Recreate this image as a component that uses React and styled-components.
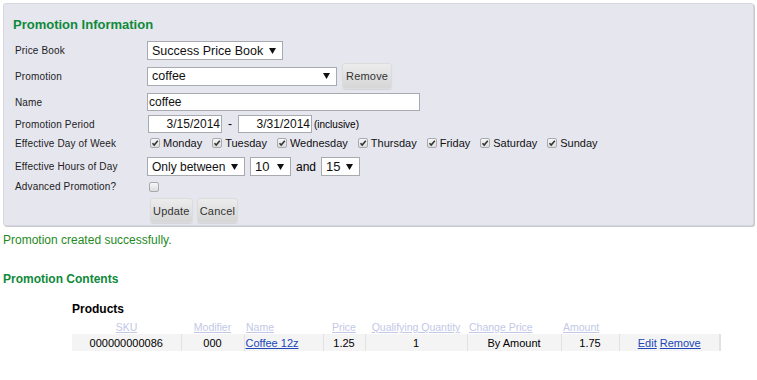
import React from "react";
import styled, { createGlobalStyle } from "styled-components";

const Global = createGlobalStyle`
  html, body { margin: 0; padding: 0; background: #fff; }
  body { padding: 3px; font-family: "Liberation Sans", Arial, sans-serif; color: #000; }
  * { box-sizing: border-box; }
`;

const Panel = styled.section`
  width: 751px;
  height: 223px;
  background: #e6e6ef;
  border: 1px solid #d6d6de;
  border-radius: 3px;
  box-shadow: 1px 1px 0 #c9c9d2;
  padding: 13px 0 0 9px;
`;

const Heading = styled.h2`
  margin: 0;
  font-size: ${(p) => p.$size || 13}px;
  line-height: 16px;
  font-weight: bold;
  color: #0e8a3a;
`;

const Form = styled.div`
  display: flex;
  flex-direction: column;
  margin-top: 8px;
  padding-left: 2px;
`;

const Row = styled.div`
  display: grid;
  grid-template-columns: 132px 1fr;
  align-items: center;
  height: ${(p) => p.$h}px;
  margin-top: ${(p) => p.$mt || 0}px;
`;

const Label = styled.span`
  font-size: 10px;
  letter-spacing: 0.15px;
  color: #222;
`;

const Controls = styled.div`
  display: flex;
  align-items: center;
  gap: ${(p) => p.$gap ?? 5}px;
`;

const Select = styled.div`
  display: flex;
  flex-shrink: 0;
  align-items: center;
  justify-content: space-between;
  white-space: nowrap;
  width: ${(p) => p.$w}px;
  height: 19px;
  background: #fff;
  border: 1px solid #a9a9b0;
  padding: 0 6px 0 4px;
  font-size: ${(p) => p.$fs || 13}px;
  color: #111;
`;

const Arrow = () => (
  <svg width="7" height="6" viewBox="0 0 7 6">
    <path d="M0 0 H7 L3.5 6 Z" fill="#111" />
  </svg>
);

const TextInput = styled.div`
  flex-shrink: 0;
  width: ${(p) => p.$w}px;
  height: 18px;
  background: #fff;
  border: 1px solid #a9a9b0;
  font-size: 12px;
  line-height: 16px;
  padding: 0 1px;
  text-align: ${(p) => (p.$right ? "right" : "left")};
  color: #111;
`;

const Button = styled.button`
  height: ${(p) => p.$h || 25}px;
  padding: 0 ${(p) => p.$px ?? 3}px;
  border: 1px solid #dcdcdc;
  border-radius: 3px;
  background: linear-gradient(#ececec, #d6d6d6);
  box-shadow: 0 1px 1px rgba(0, 0, 0, 0.08);
  font-family: "Liberation Sans", Arial, sans-serif;
  font-size: 11px;
  letter-spacing: 0.2px;
  color: #333;
`;

const Dash = styled.span`
  font-size: ${(p) => p.$fs || 12}px;
  margin: 0 ${(p) => p.$mx || 0}px;
`;

const Small = styled.span`
  font-size: 10px;
  margin-left: 2px;
`;

const Days = styled.div`
  display: flex;
  align-items: center;
  padding-left: 3px;
  gap: 10px;
`;

const Day = styled.label`
  display: flex;
  align-items: center;
  gap: 3px;
  font-size: 11px;
  color: #111;
`;

const Box = styled.span`
  display: inline-flex;
  align-items: center;
  justify-content: center;
  width: 10px;
  height: 10px;
  border: 1px solid #a9a9b0;
  border-radius: 2px;
  background: linear-gradient(#f7f7f7, #dcdcdc);
`;

const Check = ({ on }) => (
  <Box>
    {on && (
      <svg width="8" height="8" viewBox="0 0 8 8">
        <path d="M1.5 4.2 L3.2 6 L6.8 1.8" stroke="#333" strokeWidth="1.6" fill="none" />
      </svg>
    )}
  </Box>
);

const CheckCell = styled.div`
  padding-left: 2px;
  display: flex;
`;

const Message = styled.p`
  margin: 7px 0 0;
  font-size: 12px;
  line-height: 15px;
  color: #1e8a1e;
`;

const Contents = styled.div`
  margin-top: 23px;
`;

const Products = styled.div`
  margin: 15px 0 0 69px;
`;

const SubHead = styled.h3`
  margin: 0;
  font-size: 12px;
  line-height: 15px;
  font-weight: bold;
`;

const Table = styled.table`
  border-collapse: collapse;
  margin-top: 3px;
  table-layout: fixed;
  width: 648px;
`;

const Th = styled.th`
  font-weight: normal;
  font-size: 10.5px;
  color: #c3c8e6;
  text-decoration: underline;
  text-align: ${(p) => p.$align || "center"};
  padding: 0 2px;
  height: 14px;
  line-height: 12px;
`;

const Td = styled.td`
  font-size: 11px;
  height: 17px;
  background: #f4f4f4;
  border-right: ${(p) => (p.$last ? "2px solid #e2e2e2" : "1px solid #e2e2e2")};
  text-align: ${(p) => p.$align || "center"};
  padding: 0 1px;
  white-space: nowrap;
`;

const Link = styled.a`
  color: #2046b8;
  text-decoration: underline;
`;

const cols = [109, 63, 79, 42, 102, 94, 58, 101];

export default function App() {
  const days = ["Monday", "Tuesday", "Wednesday", "Thursday", "Friday", "Saturday", "Sunday"];
  return (
    <>
      <Global />
      <Panel>
        <Heading>Promotion Information</Heading>
        <Form>
          <Row $h={19}>
            <Label>Price Book</Label>
            <Controls>
              <Select $w={136} $fs={12.5}>
                <span>Success Price Book</span>
                <Arrow />
              </Select>
            </Controls>
          </Row>
          <Row $h={26} $mt={3}>
            <Label>Promotion</Label>
            <Controls>
              <Select $w={190} $fs={12.5}>
                <span>coffee</span>
                <Arrow />
              </Select>
              <Button $h={26}>Remove</Button>
            </Controls>
          </Row>
          <Row $h={18} $mt={4}>
            <Label>Name</Label>
            <Controls>
              <TextInput $w={273}>coffee</TextInput>
            </Controls>
          </Row>
          <Row $h={18} $mt={4}>
            <Label>Promotion Period</Label>
            <Controls $gap={0} style={{ paddingLeft: 1 }}>
              <TextInput $w={74} $right>3/15/2014</TextInput>
              <Dash $mx={6}>-</Dash>
              <TextInput $w={74} $right>3/31/2014</TextInput>
              <Small>(inclusive)</Small>
            </Controls>
          </Row>
          <Row $h={14} $mt={3}>
            <Label>Effective Day of Week</Label>
            <Days>
              {days.map((d) => (
                <Day key={d}>
                  <Check on />
                  {d}
                </Day>
              ))}
            </Days>
          </Row>
          <Row $h={19} $mt={7}>
            <Label>Effective Hours of Day</Label>
            <Controls $gap={5}>
              <Select $w={98} $fs={12}>
                <span>Only between</span>
                <Arrow />
              </Select>
              <Select $w={41}>
                <span>10</span>
                <Arrow />
              </Select>
              <Dash $fs={12}>and</Dash>
              <Select $w={39}>
                <span>15</span>
                <Arrow />
              </Select>
            </Controls>
          </Row>
          <Row $h={11} $mt={5}>
            <Label>Advanced Promotion?</Label>
            <CheckCell>
              <Check />
            </CheckCell>
          </Row>
          <Row $h={25} $mt={6}>
            <span />
            <Controls $gap={4} style={{ paddingLeft: 3 }}>
              <Button $px={2}>Update</Button>
              <Button $px={2}>Cancel</Button>
            </Controls>
          </Row>
        </Form>
      </Panel>
      <Message>Promotion created successfully.</Message>
      <Contents>
        <Heading $size={12}>Promotion Contents</Heading>
        <Products>
          <SubHead>Products</SubHead>
          <Table>
            <colgroup>
              {cols.map((w, i) => (
                <col key={i} style={{ width: w }} />
              ))}
            </colgroup>
            <thead>
              <tr>
                <Th>SKU</Th>
                <Th>Modifier</Th>
                <Th $align="left">Name</Th>
                <Th>Price</Th>
                <Th>Qualifying Quantity</Th>
                <Th $align="left">Change Price</Th>
                <Th $align="left">Amount</Th>
                <Th />
              </tr>
            </thead>
            <tbody>
              <tr>
                <Td>000000000086</Td>
                <Td>000</Td>
                <Td $align="left">
                  <Link>Coffee 12z</Link>
                </Td>
                <Td>1.25</Td>
                <Td>1</Td>
                <Td>By Amount</Td>
                <Td>1.75</Td>
                <Td $last>
                  <Link>Edit</Link> <Link>Remove</Link>
                </Td>
              </tr>
            </tbody>
          </Table>
        </Products>
      </Contents>
    </>
  );
}
